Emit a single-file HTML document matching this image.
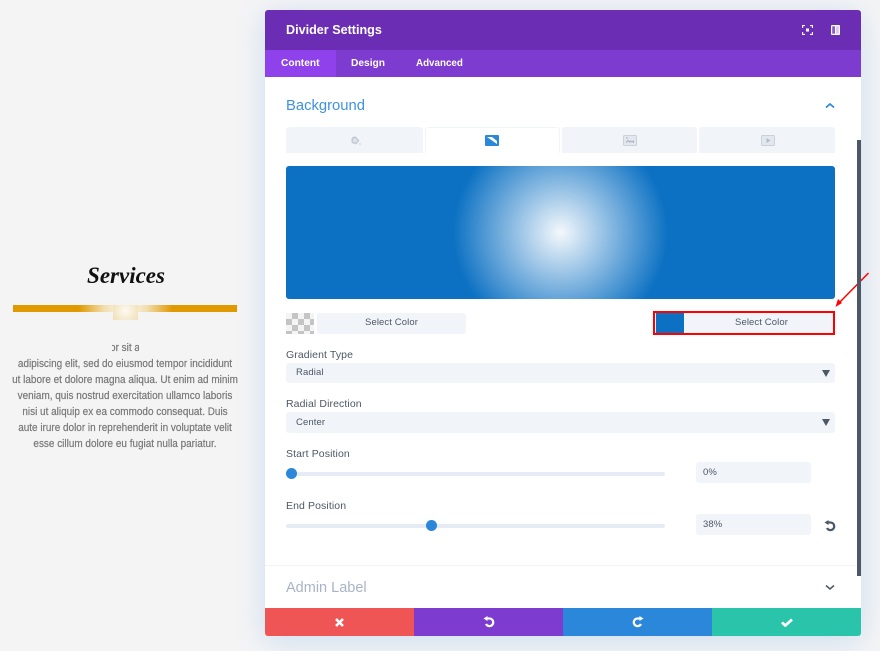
<!DOCTYPE html>
<html><head><meta charset="utf-8"><style>
*{box-sizing:border-box}
html,body{margin:0;padding:0}
body{width:880px;height:651px;background:#f4f4f5;position:relative;overflow:hidden;font-family:"Liberation Sans",sans-serif}
.a{position:absolute}
.t{position:absolute;white-space:nowrap;line-height:1}
.line{position:absolute;left:0;width:250px;text-align:center;font-size:11px;color:#777;line-height:16px;white-space:nowrap;transform:scaleX(.905);transform-origin:125px 50%;-webkit-text-stroke:.2px #777}
.f{position:absolute;background:#f1f4f9;border-radius:3px}
.lab{position:absolute;left:286px;font-size:10.5px;color:#4c5866;line-height:14px;white-space:nowrap;letter-spacing:.1px}
.val{position:absolute;font-size:9.5px;color:#4c5866;line-height:12px;white-space:nowrap;letter-spacing:.1px}
.tab{position:absolute;top:127px;height:26px;background:#f1f4f9;border-radius:3px 3px 0 0}
.sl{position:absolute;left:286px;width:379px;height:4px;background:#e6ecf5;border-radius:2px}
.th{position:absolute;width:11px;height:11px;border-radius:50%;background:#2b87da}
.arrow{position:absolute;left:822px;width:0;height:0;border-left:4px solid transparent;border-right:4px solid transparent;border-top:7px solid #4c5866}
.foot{position:absolute;top:608px;height:28px}
svg{position:absolute;display:block}
</style></head><body>

<div class="t" style="left:0;width:252px;top:263px;text-align:center;font-family:'Liberation Serif',serif;font-style:italic;font-weight:700;font-size:23px;line-height:26px;color:#111">Services</div>
<div class="a" style="left:13px;top:305px;width:224px;height:7px;background:#e09900"></div>
<div class="a" style="left:78px;top:305px;width:95px;height:7px;background:radial-gradient(ellipse 47px 30px at 50% 50%,#fdfbf5 0%,#f2dfb0 45%,#e09900 100%)"></div>
<div class="a" style="left:113px;top:305px;width:25px;height:15px;background:radial-gradient(circle at 50% 40%,#fdfaf2 0,#f0dfb4 100%)"></div>

<div class="line" style="top:340px">or sit a</div>
<div class="a" style="left:0;top:340px;width:112px;height:16px;background:#f4f4f5"></div>
<div class="a" style="left:139px;top:340px;width:100px;height:16px;background:#f4f4f5"></div>
<div class="line" style="top:356px">adipiscing elit, sed do eiusmod tempor incididunt</div>
<div class="line" style="top:372px">ut labore et dolore magna aliqua. Ut enim ad minim</div>
<div class="line" style="top:388px">veniam, quis nostrud exercitation ullamco laboris</div>
<div class="line" style="top:404px">nisi ut aliquip ex ea commodo consequat. Duis</div>
<div class="line" style="top:420px">aute irure dolor in reprehenderit in voluptate velit</div>
<div class="line" style="top:436px">esse cillum dolore eu fugiat nulla pariatur.</div>

<!-- panel -->
<div class="a" style="left:265px;top:10px;width:596px;height:626px;background:#fff;border-radius:3px;box-shadow:0 5px 30px rgba(43,135,218,.2)"></div>
<div class="a" style="left:265px;top:10px;width:596px;height:40px;background:#6b2db3;border-radius:3px 3px 0 0"></div>
<div class="a" style="left:265px;top:50px;width:596px;height:27px;background:#7e3bd0"></div>
<div class="a" style="left:265px;top:50px;width:71px;height:27px;background:#8f42ec"></div>
<div class="t" style="left:286px;top:22px;font-size:12.6px;font-weight:700;color:#fff;line-height:16px">Divider Settings</div>
<div class="t" style="left:281px;top:57px;font-size:10.2px;font-weight:700;color:#fff;line-height:14px">Content</div>
<div class="t" style="left:351px;top:57px;font-size:10.2px;font-weight:700;color:#fff;line-height:14px">Design</div>
<div class="t" style="left:416px;top:57px;font-size:9.8px;font-weight:700;color:#fff;line-height:14px">Advanced</div>

<svg style="left:802px;top:25px" width="11" height="10" viewBox="0 0 11 10" fill="none" stroke="#fff" stroke-width="1.100"><path d="M.6 3V.6H3M8 .6h2.400V3M.6 7v2.400H3M8 9.400h2.400V7"/><rect x="4" y="3.500" width="3" height="3" fill="#fff" stroke="none"/></svg>
<svg style="left:831px;top:25px" width="9" height="10" viewBox="0 0 9 10"><rect width="9" height="10" rx="1" fill="#fff"/><rect x="1.200" y="1.300" width="2.800" height="7.400" fill="#8a5cc6"/><rect x="5" y="1.300" width="2.800" height="7.400" fill="#d9c9ee"/></svg>

<div class="t" style="left:286px;top:97px;font-size:14.800px;color:#3f92e0;line-height:18px">Background</div>
<svg style="left:825px;top:102px" width="10" height="7" viewBox="0 0 10 7" fill="none" stroke="#2b87da" stroke-width="1.700"><path d="M1 5.500L5 2l4 3.500"/></svg>

<div class="tab" style="left:286px;width:137px"></div>
<div class="a" style="left:425px;top:127px;width:135px;height:26px;background:#fff;border:1px solid #f1f4f9;border-bottom:0;border-radius:3px 3px 0 0"></div>
<div class="tab" style="left:562px;width:135px"></div>
<div class="tab" style="left:699px;width:136px"></div>
<svg style="left:350px;top:135px" width="11" height="11" viewBox="0 0 11 11" fill="none" stroke="#c3cbd6" stroke-width="1.500"><path d="M2 4.500L5 2l3.500 3.500L6 8.500 2.500 7.500z" fill="#dfe4ec"/><path d="M2.500 2l1.500 1.500"/><circle cx="10" cy="9" r=".8" fill="#c3cbd6" stroke="none"/></svg>
<svg style="left:485px;top:135px" width="14" height="11" viewBox="0 0 14 11"><rect width="14" height="11" rx="1" fill="#2b87da"/><path d="M2 2h5l5 4v3z" fill="#fff"/></svg>
<svg style="left:623px;top:135px" width="14" height="11" viewBox="0 0 14 11" fill="none" stroke="#c9d1db" stroke-width="1"><rect x=".5" y=".5" width="13" height="10" rx="1" fill="#e3e8ef"/><path d="M3 3h2M3 7.500l2-2 1.500 1.500 1-1 1 1 2-1v2" stroke="#aab3bf"/></svg>
<svg style="left:761px;top:135px" width="14" height="11" viewBox="0 0 14 11" fill="none" stroke="#c9d1db" stroke-width="1"><rect x=".5" y=".5" width="13" height="10" rx="1" fill="#e3e8ef"/><path d="M5.500 3l4 2.500-4 2.500z" fill="#b4bcc8" stroke="none"/></svg>

<div class="a" style="left:286px;top:166px;width:549px;height:133px;border-radius:3px;background:radial-gradient(circle at center,#f4f8fc 0%,#0c71c3 38%)"></div>

<!-- color left -->
<div class="a" style="left:286px;top:313px;width:28px;height:21px;background-color:#f4f4f4;background-image:linear-gradient(45deg,#c4c4c4 25%,transparent 25%,transparent 75%,#c4c4c4 75%),linear-gradient(45deg,#c4c4c4 25%,transparent 25%,transparent 75%,#c4c4c4 75%);background-size:12px 12px;background-position:0 0,6px 6px"></div>
<div class="f" style="left:317px;top:313px;width:149px;height:21px"></div>
<div class="val" style="left:317px;top:317px;width:149px;text-align:center">Select Color</div>

<!-- color right -->
<div class="f" style="left:655px;top:313px;width:178px;height:20px;border-radius:0"></div>
<div class="a" style="left:656px;top:313px;width:28px;height:20px;background:#0c71c3"></div>
<div class="val" style="left:684px;top:317px;width:155px;text-align:center">Select Color</div>
<div class="a" style="left:653px;top:311px;width:182px;height:24px;border:2px solid #f00"></div>
<svg style="left:832px;top:268px" width="40" height="42" viewBox="0 0 40 42" fill="none"><path d="M36.500 5L6 36" stroke="#f00" stroke-width="1.500"/><path d="M3.500 39L6 31l4 4z" fill="#f00"/></svg>

<div class="lab" style="top:348px">Gradient Type</div>
<div class="f" style="left:286px;top:363px;width:549px;height:20px"></div>
<div class="val" style="left:296px;top:367px">Radial</div>
<div class="arrow" style="top:370px"></div>

<div class="lab" style="top:397px">Radial Direction</div>
<div class="f" style="left:286px;top:412px;width:549px;height:21px"></div>
<div class="val" style="left:296px;top:417px">Center</div>
<div class="arrow" style="top:419px"></div>

<div class="lab" style="top:447px">Start Position</div>
<div class="sl" style="top:472px"></div>
<div class="th" style="left:286px;top:468px"></div>
<div class="f" style="left:696px;top:462px;width:115px;height:21px"></div>
<div class="val" style="left:703px;top:467px">0%</div>

<div class="lab" style="top:499px">End Position</div>
<div class="sl" style="top:524px"></div>
<div class="th" style="left:426px;top:520px"></div>
<div class="f" style="left:696px;top:514px;width:115px;height:21px"></div>
<div class="val" style="left:703px;top:519px">38%</div>
<svg style="left:824px;top:520px" width="12" height="12" viewBox="0 0 12 12" fill="none"><path d="M3 2.500h3.500a3.800 3.800 0 1 1-3.500 5.500" stroke="#4c5866" stroke-width="2.300"/><path d="M0.500 2.500L4.500 0v5z" fill="#4c5866"/></svg>

<div class="a" style="left:265px;top:565px;width:596px;height:1px;background:#f1f4f9"></div>
<!-- scrollbar -->
<div class="a" style="left:857px;top:140px;width:4px;height:436px;background:#4c5866"></div>

<div class="t" style="left:286px;top:579px;font-size:14.500px;color:#a8b4c6;line-height:18px">Admin Label</div>
<svg style="left:825px;top:584px" width="10" height="7" viewBox="0 0 10 7" fill="none" stroke="#4c5866" stroke-width="1.500"><path d="M1 1.500L5 5l4-3.500"/></svg>

<!-- footer -->
<div class="foot" style="left:265px;width:149px;background:#ef5555;border-radius:0 0 0 3px"></div>
<div class="foot" style="left:414px;width:149px;background:#7e3bd0"></div>
<div class="foot" style="left:563px;width:149px;background:#2b87da"></div>
<div class="foot" style="left:712px;width:149px;background:#29c4a9;border-radius:0 0 3px 0"></div>
<svg style="left:335px;top:618px" width="9" height="9" viewBox="0 0 9 9" fill="none" stroke="#fff" stroke-width="2.600"><path d="M1 1l7 7M8 1L1 8"/></svg>
<svg style="left:483px;top:616px" width="12" height="12" viewBox="0 0 12 12" fill="none"><path d="M3 2.500h3.500a3.800 3.800 0 1 1-3.500 5.500" stroke="#fff" stroke-width="2.300"/><path d="M0.500 2.500L4.500 0v5z" fill="#fff"/></svg>
<svg style="left:632px;top:616px" width="12" height="12" viewBox="0 0 12 12" fill="none"><path d="M9 2.500H5.500a3.800 3.800 0 1 0 3.500 5.500" stroke="#fff" stroke-width="2.300"/><path d="M11.500 2.500L7.500 0v5z" fill="#fff"/></svg>
<svg style="left:781px;top:618px" width="12" height="9" viewBox="0 0 12 9" fill="none" stroke="#fff" stroke-width="2.800"><path d="M1 4.500L4.300 7.500 11 1.500"/></svg>

</body></html>
